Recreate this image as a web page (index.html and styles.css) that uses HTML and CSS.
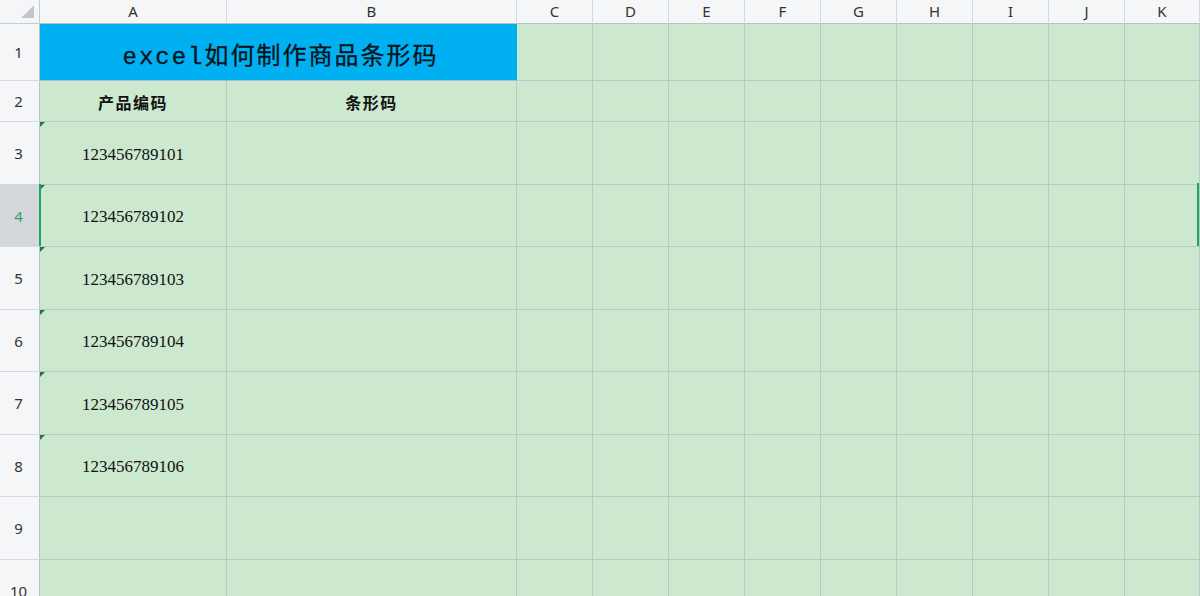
FILE: index.html
```html
<!DOCTYPE html>
<html lang="zh-CN">
<head>
<meta charset="utf-8">
<title>excel如何制作商品条形码</title>
<link rel="stylesheet" href="styles.css">
</head>
<body>
<div class="sheet">
  <div class="corner"><span class="corner-tri"></span></div>
  <div class="colh">A</div><div class="colh">B</div><div class="colh">C</div><div class="colh">D</div><div class="colh">E</div><div class="colh">F</div><div class="colh">G</div><div class="colh">H</div><div class="colh">I</div><div class="colh">J</div><div class="colh">K</div>

  <div class="rowh">1</div>
  <div class="cell title">excel如何制作商品条形码</div>
  <div class="cell"></div><div class="cell"></div><div class="cell"></div><div class="cell"></div><div class="cell"></div><div class="cell"></div><div class="cell"></div><div class="cell"></div><div class="cell"></div>

  <div class="rowh">2</div>
  <div class="cell head">产品编码</div><div class="cell head">条形码</div>
  <div class="cell"></div><div class="cell"></div><div class="cell"></div><div class="cell"></div><div class="cell"></div><div class="cell"></div><div class="cell"></div><div class="cell"></div><div class="cell"></div>

  <div class="rowh">3</div>
  <div class="cell num">123456789101</div><div class="cell"></div>
  <div class="cell"></div><div class="cell"></div><div class="cell"></div><div class="cell"></div><div class="cell"></div><div class="cell"></div><div class="cell"></div><div class="cell"></div><div class="cell"></div>

  <div class="rowh sel">4</div>
  <div class="cell num">123456789102</div><div class="cell"></div>
  <div class="cell"></div><div class="cell"></div><div class="cell"></div><div class="cell"></div><div class="cell"></div><div class="cell"></div><div class="cell"></div><div class="cell"></div><div class="cell sel-end"></div>

  <div class="rowh">5</div>
  <div class="cell num">123456789103</div><div class="cell"></div>
  <div class="cell"></div><div class="cell"></div><div class="cell"></div><div class="cell"></div><div class="cell"></div><div class="cell"></div><div class="cell"></div><div class="cell"></div><div class="cell"></div>

  <div class="rowh">6</div>
  <div class="cell num">123456789104</div><div class="cell"></div>
  <div class="cell"></div><div class="cell"></div><div class="cell"></div><div class="cell"></div><div class="cell"></div><div class="cell"></div><div class="cell"></div><div class="cell"></div><div class="cell"></div>

  <div class="rowh">7</div>
  <div class="cell num">123456789105</div><div class="cell"></div>
  <div class="cell"></div><div class="cell"></div><div class="cell"></div><div class="cell"></div><div class="cell"></div><div class="cell"></div><div class="cell"></div><div class="cell"></div><div class="cell"></div>

  <div class="rowh">8</div>
  <div class="cell num">123456789106</div><div class="cell"></div>
  <div class="cell"></div><div class="cell"></div><div class="cell"></div><div class="cell"></div><div class="cell"></div><div class="cell"></div><div class="cell"></div><div class="cell"></div><div class="cell"></div>

  <div class="rowh">9</div>
  <div class="cell"></div><div class="cell"></div>
  <div class="cell"></div><div class="cell"></div><div class="cell"></div><div class="cell"></div><div class="cell"></div><div class="cell"></div><div class="cell"></div><div class="cell"></div><div class="cell"></div>

  <div class="rowh">10</div>
  <div class="cell"></div><div class="cell"></div>
  <div class="cell"></div><div class="cell"></div><div class="cell"></div><div class="cell"></div><div class="cell"></div><div class="cell"></div><div class="cell"></div><div class="cell"></div><div class="cell"></div>
</div>
</body>
</html>
```

FILE: styles.css
```css
html, body {
  margin: 0;
  padding: 0;
  background: #ffffff;
  overflow: hidden;
}

.sheet {
  display: grid;
  grid-template-columns: 40px 187px 290px repeat(8, 76px) 75px;
  grid-template-rows: 24px 57px 41px 63px 62px 63px 62px 63px 62px 63px 63px;
  width: 1200px;
  height: 596px;
  overflow: hidden;
  font-family: "Noto Sans", "Liberation Sans", sans-serif;
}

.corner,
.colh,
.rowh,
.cell {
  box-sizing: border-box;
  position: relative;
}

.corner {
  background: #f5f6f8;
  border-right: 1px solid #c6ccd3;
  border-bottom: 1px solid #c6ccd3;
}

.corner-tri {
  position: absolute;
  right: 5px;
  bottom: 5px;
  width: 0;
  height: 0;
  border-left: 13px solid transparent;
  border-bottom: 13px solid #c4c6c9;
}

.colh {
  background: #f5f6f8;
  border-right: 1px solid #d6dae0;
  border-bottom: 1px solid #b9c0c8;
  color: #333333;
  font-size: 15px;
  display: flex;
  align-items: center;
  justify-content: center;
  padding-bottom: 2px;
}

.rowh {
  background: #f5f6f8;
  border-right: 1px solid #b9c0c8;
  border-bottom: 1px solid #d6dae0;
  color: #333333;
  font-size: 15px;
  display: flex;
  align-items: center;
  justify-content: center;
  padding-right: 2px;
}

.rowh.sel {
  background: #d4d7dc;
  color: #2fa36b;
}

.rowh.sel::after {
  content: "";
  position: absolute;
  right: -2px;
  top: -1px;
  bottom: 0;
  width: 2px;
  background: #21a366;
  z-index: 2;
}

.cell {
  background: #cce8cf;
  border-right: 1px solid #b8c8cc;
  border-bottom: 1px solid #b8c8cc;
  display: flex;
  align-items: center;
  justify-content: center;
  color: #111111;
}

.cell.title {
  grid-column: span 2;
  background: #00b0f0;
  border-right: none;
  border-bottom: 1px solid #9fc0cc;
  font-family: "Liberation Mono", "Noto Sans CJK SC", monospace;
  font-size: 24px;
  letter-spacing: 2px;
  color: #08141c;
  padding-top: 2px;
  padding-left: 4px;
  -webkit-text-stroke: 0.3px #08141c;
}

.cell.head {
  font-family: "Liberation Serif", "Noto Sans CJK SC", serif;
  font-weight: bold;
  font-size: 16px;
  letter-spacing: 1.5px;
  padding-top: 2px;
}

.cell.num {
  font-family: "Liberation Serif", serif;
  font-size: 17px;
  padding-top: 3px;
}

.cell.num::before {
  content: "";
  position: absolute;
  left: 0;
  top: 0;
  width: 0;
  height: 0;
  border-top: 5px solid #1f7a3a;
  border-right: 5px solid transparent;
}

.cell.sel-end::after {
  content: "";
  position: absolute;
  right: 0;
  top: -2px;
  bottom: 0;
  width: 2px;
  background: #21a366;
}
```
